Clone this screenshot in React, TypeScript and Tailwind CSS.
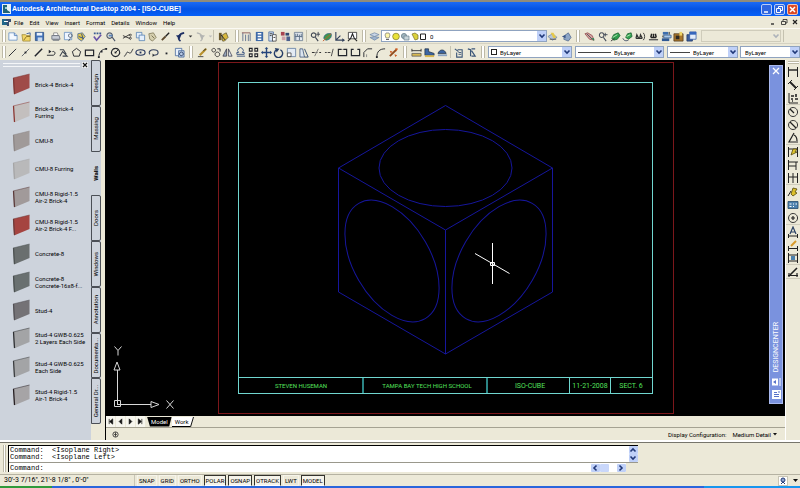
import React, { useState } from 'react';

type Tool = { label: string; art: React.ReactNode };

// Short helpers for the toolbar glyphs, all drawn on a 12x12 grid
const ln = (d: string, stroke = '#22252c', width = 1) => (
  <path d={d} stroke={stroke} strokeWidth={width} fill="none" />
);
const fl = (d: string, fill = '#22252c', stroke = 'none') => (
  <path d={d} fill={fill} stroke={stroke} strokeWidth={0.8} />
);
const tool = (label: string, ...parts: React.ReactNode[]): Tool => ({
  label,
  art: parts.map((part, i) => <React.Fragment key={i}>{part}</React.Fragment>),
});

const fileTools: Tool[] = [
  tool('New', fl('M2 2h6l3 3v5H2z', '#f4f9ff', '#5b86bd'), ln('M8 2v3h3', '#5b86bd')),
  tool('Open', fl('M1 4h4l1 1h4v6H2z', '#f1d567', '#9a8430'), ln('M6 3l4-1v3', '#3c5f9a'), ln('M3 10l3-4h4', '#8a7020')),
  tool('Save', fl('M1.500 1.500h9v9h-9z', '#3f70b8', '#23477e'), fl('M3 2h6v3H3z', '#e9f1fb'), fl('M4 7h5v4H4z', '#c8d8ec')),
];
const printTools: Tool[] = [
  tool('Plot', fl('M4 2h4l1 3H4z', '#fff', '#777'), fl('M2 5h8l1 4H2z', '#c7ccd6', '#596070'), ln('M3 10h7', '#596070')),
  tool('Plot Preview', fl('M1.500 1.500h8v8h-8z', '#eef5ff', '#5b86bd'), ln('M8 3a2 2 0 1 0 .1 0M8 8l-2 3', '#4a5568')),
  tool('Publish', fl('M2 3l5-1 3 4-4 5-4-3z', '#e5c94d', '#3c5f9a'), ln('M3 6l5 2M6 3l2 6', '#2c4d86')),
];
const checkTools: Tool[] = [
  tool('Spelling', ln('M2 2.500h2M5 2.500h2M8 2.500h2', '#3a5c92', 2), ln('M2 6l3 4 5-6', '#6b55a8', 1.8)),
  tool('Find', ln('M5 2a3 3 0 1 0 .1 0M8 7l3 4', '#4a5568', 1.2), fl('M4 4h4v2H4z', '#5b86bd')),
];
const editTools: Tool[] = [
  tool('Cut', ln('M1 5l7 3M1 8l7-4', '#333'), ln('M9 3.500a1 1 0 1 0 .1 0M9 7a1 1 0 1 0 .1 0', '#333')),
  tool('Copy', fl('M1.500 1.500h6v6h-6z', '#e4effc', '#4c78ae'), fl('M4.500 4.500h6v6h-6z', '#e4effc', '#4c78ae')),
  tool('Paste', fl('M2 3l5-1 3 5-4 4-3-2z', '#d5cfae', '#77704f'), ln('M5 5l3 3', '#77704f')),
  tool('Match Properties', ln('M2 10l4-4', '#5e4a2e', 2), ln('M6 6l4-4', '#222', 1.5)),
];
const undoTools: Tool[] = [tool('Undo', ln('M6 11C2 8 4 3 10 2', '#1d2f63', 1.8), fl('M1 5l4 4 2-5z', '#1d2f63'))];
const undoListTools: Tool[] = [tool('Undo list', fl('M4 5h4L6 7z', '#333'))];
const redoTools: Tool[] = [tool('Redo', ln('M6 11c4-3 2-8-4-9', '#b4b5b2', 1.4), fl('M11 5L7 9 5 4z', '#b4b5b2'))];
const redoListTools: Tool[] = [tool('Redo list', fl('M4 5h4L6 7z', '#bbb'))];
const palTools: Tool[] = [
  tool('Content Browser', fl('M1 2h3v8H1z', '#6c5a2c'), fl('M5 4l4-2 2 5-4 4H5z', '#d8b83c', '#5d5330'), ln('M3 4l5 6', '#222')),
];
const navTools: Tool[] = [
  tool('Project Browser', ln('M2 2v9M5 4v7M8 4v7M10 2v9', '#62738f'), ln('M1 2h9', '#8b5a5a')),
  tool('DesignCenter', fl('M2 1h8v10H2z', '#3e6aa8'), ln('M4 3h4M4 6h4M4 9h4', '#fff', 1.4)),
  tool('Properties', fl('M2 1h5v10H2z', '#d7e4f5', '#3b5f95'), fl('M6 4h4v7H6z', '#fff', '#333'), ln('M3 3h3M3 5h2M7 7h2', '#333')),
  tool('Tool Palettes', fl('M1 1h4v4H1z', '#a84450'), fl('M6 2h4v3H6z', '#33486f'), fl('M2 6h4v4H2z', '#cfa0a8'), fl('M7 6h4v5H7z', '#4b5f8c')),
  tool('Sheets', fl('M1.500 1.500h9v9h-9z', '#e2e8ef', '#5f7288'), ln('M3 3v7M5 3v3M7 4v6M9 3v4M2 6h8', '#5f7288')),
];
const viewTools: Tool[] = [
  tool('Zoom', ln('M5 2a2.500 2.500 0 1 0 .1 0M7 7l3 4', '#3c4350', 1.2), ln('M10 1v5M8 3.500h4', '#3c4350')),
  tool('3D Orbit', fl('M2 8c0-4 4-6 8-5 1 4-2 7-6 7z', '#3f9a4a', '#2a5f84'), ln('M1 11l9-8', '#c45b2c')),
  tool('UCS', ln('M2 1v9h9M2 10l5-5', '#33415c', 1.2), fl('M9 8l3 2-3 2z', '#33415c')),
  tool('Named Views', fl('M1.500 1.500h9v7h-9z', '#fff', '#222'), ln('M4 8l2-5 2 5M1 11l3-3M11 11L8 8', '#222', 1.2)),
];
const layerTools: Tool[] = [
  tool('Layer Manager', fl('M1 4l5-2 5 2-5 2z', '#c9d6e6', '#6f87a5'), fl('M1 7l5-1 5 1-5 3z', '#9db3cd', '#6f87a5')),
];
const layerEndTools: Tool[] = [
  tool('Make Layer Current', fl('M1 6l5-3 5 4-5 3z', '#b6c4d8', '#6f87a5'), fl('M4 2h3l3 5-3 1z', '#e6c94a'), ln('M3 9h7', '#555')),
  tool('Layer Previous', fl('M4 5l4-3 3 5-3 4-5-2z', '#8ea6c6', '#4d668c'), fl('M1 6l4-2v4z', '#3a5687')),
];
const navigateTools: Tool[] = [
  tool('Pan', fl('M1 3l3-1 5 3 2 5-5-1z', '#d4a0a0', '#8d4848'), ln('M3 3l6 6', '#555'), fl('M8 8h3v3z', '#2c8754')),
  tool('Zoom Realtime', ln('M5 2a2.500 2.500 0 1 0 .1 0M7 7l3 4', '#444b58', 1.1), ln('M9 2v4M7.500 4h4', '#444b58')),
  tool('Orbit Left', fl('M2 8l2-4 5-2 2 3-3 4-4 1z', '#2e9d4b', '#175a2c'), ln('M3 7l5-3', '#b6e9b8'), ln('M1 11l4-3', '#333')),
  tool('Orbit Right', fl('M4 7l2-4 4-1 1 4-4 3z', '#34a352', '#175a2c'), ln('M1 8c1 3 4 3 6 2', '#39465e'), ln('M5 6l4-2', '#c0ecb8')),
  tool('Find Object', ln('M1 8l1-4 2 4M5 8l1-4 2 4M1 8h7', '#333', 1.3), ln('M9 2c2 2 2 6 0 8', '#333')),
  tool('Find Next', ln('M3 7l1-4M9 7L8 3M6 3v4M3 7h6', '#222', 1.6), ln('M1 9.500h10', '#555', 1.4)),
  tool('Render', fl('M2 1h6v3H2z', '#3d6eae'), fl('M3 4.500h8v3H3z', '#a9c8ea', '#30578c'), fl('M1 8h8v3H1z', '#2e5894'), ln('M9 1v3M2 5v2', '#333')),
  tool('Materials', fl('M1 3h10v8H1z', '#a9762c', '#4f3a1d'), fl('M3 5h4v4H3z', '#2e2a24'), fl('M7 1h3v4H7z', '#f0d565')),
  tool('Launch', fl('M1 4h6v7H1z', '#3c5f9c', '#1e3566'), fl('M4 1h7v8H4z', '#e4edfa', '#2f55a0'), fl('M4 1h7v3H4z', '#3767bc')),
];

const drawTools: Tool[] = [
  tool('Line', ln('M2 10l8-8')),
  tool('Construction Line', ln('M2 10l8-8', '#5b6068'), fl('M5 5h2v2H5z')),
  tool('Ray', ln('M2 10l8-8', '#22252c', 1.6)),
  tool('Polyline', ln('M1 9h7c3-1 2-5-1-4'), fl('M3 3l3 2-3 2z')),
  tool('3D Polyline', ln('M2 3h4l3 5M2 10l3-5 5 5H5', '#3e454f', 1.2)),
  tool('Polygon', ln('M6 1.500l4.500 3.500-1.500 5H3L1.500 5z')),
  tool('Rectangle', ln('M1.500 3.500h9v6h-9z', '#22252c', 1.3)),
  tool('Arc', ln('M2 11C2 6 5 2 11 2'), fl('M1 10h2v2H1zM9 1h2v2H9zM4 4h2v2H4z')),
  tool('Circle', ln('M6 1.500a4.500 4.500 0 1 0 .1 0', '#22252c', 1.2), ln('M6 6l3-3'), fl('M5 5h2v2H5z')),
  tool('Spline', ln('M1 10c3 0 2-6 5-4s3-1 5-4')),
  tool('Ellipse', ln('M6 3c3 0 5 1 5 3s-2 3-5 3-5-1-5-3 2-3 5-3', '#22335c', 1.2), fl('M5 5h2v2H5z', '#22335c')),
  tool('Ellipse Arc', ln('M2 8C0 5 3 3 6 3s5 1 5 3-2 3-5 3', '#35425e', 1.2), fl('M5 7l2 2-2 2z')),
  tool('Point', fl('M5 6h2v2H5z')),
  tool('Hatch', fl('M1.500 1.500h7v8h-7z', '#e9f1fb', '#3b5f95'), fl('M5 4h6v7H5z', '#b9cce6', '#3b5f95'), ln('M8 5.500a2 2 0 1 0 .1 0', '#23365f')),
];
const modifyTools: Tool[] = [
  tool('Erase', ln('M1 10.500h6', '#444'), ln('M3 9l7-7', '#b8912c', 2.4), ln('M7 4l3-2', '#333')),
  tool('Copy Object', ln('M4 1.500a2 2 0 1 0 .1 0M8 5.500a2.500 2.500 0 1 0 .1 0', '#333'), ln('M8 2h3v3')),
  tool('Mirror', fl('M5 2v8H1z', '#98a8bc', '#334'), fl('M7 2v8h4z', '#dfe6ee', '#334')),
  tool('Offset', ln('M2 10h9M2 8h8V6H8a3 3 0 1 0-4 0H2z', '#38527e')),
  tool('Array', ln('M1.500 1.500h3v3h-3zM7.500 1.500h3v3h-3zM1.500 7.500h3v3h-3zM7.500 7.500h3v3h-3z', '#22252c', 1.2)),
  tool('Move', ln('M6 1v10M1 6h10', '#24447b', 1.5), fl('M6 0l2 2H4zM6 12l2-2H4zM0 6l2-2v4zM12 6l-2-2v4z', '#24447b')),
  tool('Rotate', ln('M4 3a4.500 4.500 0 1 0 4 0', '#243c66', 1.5), fl('M2 1l5 1-3 4z', '#243c66')),
  tool('Scale', fl('M1.500 1.500h9v9h-9z', '#e3ebf4', '#54729b'), fl('M1.500 6.500h4v4h-4z', '#fff', '#333')),
  tool('Stretch', fl('M1 11V2h3l2 9z', '#dce5f0', '#30496f'), ln('M6 2l4 9H6', '#30496f')),
  tool('Trim', ln('M1 6h3M5 6h2M9 6h2', '#333', 1.2), ln('M4 10l4-8', '#777')),
  tool('Extend', ln('M1 6h2M4 6h3', '#444', 1.2), ln('M10 2L8 10', '#444')),
  tool('Break at Point', ln('M1.500 2.500h9v7h-9z', '#22252c', 1.3), fl('M5 1h2v2H5z', '#ece9d8')),
  tool('Break', ln('M4 2.500H1.500v7h9v-7H8', '#22252c', 1.3)),
  tool('Chamfer', ln('M2 11V6l4-4h5'), ln('M5 11V8', '#888')),
  tool('Fillet', ln('M2 11C2 5 5 2 11 2'), fl('M1 10h2v2H1z')),
  tool('Explode', ln('M2 10l7-7', '#8f4a1c', 2), fl('M8 1l3 1-2 3zM2 4l3 1-2 2zM7 8l3 1-2 2z', '#cf5d24')),
];
const inquiryTools: Tool[] = [
  tool('Distance', fl('M1 7h10v3H1z', '#d8b850', '#555'), ln('M1 4h10M1 2v3M11 2v3', '#333')),
  tool('Area', fl('M1 2h4v3l6 2v2H1z', '#3c66a4', '#234'), fl('M1 9h10v2H1z', '#d8b850')),
  tool('Region', fl('M1 7c2-5 7-5 9 0z', '#3c66a4', '#234'), fl('M1 8h10v2H1z', '#8aa4c4')),
];
const listTools: Tool[] = [
  tool('List', ln('M2 2l4 3M5 3h5v8H4V6', '#3b5678', 1.2), ln('M6 6h3M6 8h3', '#3b5678')),
  tool('Locate Point', ln('M2 2l3 1v7M6 2h4M6 4l4 6H6', '#3b5678', 1.3)),
];

const dimTools: Tool[][] = [
  [
    tool('Linear Dimension', ln('M1.500 1v10M10.500 1v10', '#222'), ln('M2 4h8', '#222', 1.4)),
    tool('Aligned Dimension', ln('M3 3l6 6', '#222', 1.8), ln('M1 5l4-4M7 11l4-4', '#222')),
    tool('Ordinate', ln('M2 1v10h9', '#222'), ln('M4 4h3M9 2v3M4 7h2M8 7h3M5 9h1', '#222', 1.6)),
  ],
  [
    tool('Radius', ln('M6 1.500a4.500 4.500 0 1 0 .1 0', '#333'), ln('M3 3l4 4', '#222', 1.3)),
    tool('Diameter', ln('M6 1.500a4.500 4.500 0 1 0 .1 0', '#333'), ln('M3 3l6 6', '#222', 1.3)),
    tool('Angular', ln('M7 1L2 10h9M7 3c2 1 3 4 3 6', '#222', 1.2)),
  ],
  [
    tool('Quick Dimension', ln('M1.500 1v10M10.500 1v10M2 3h8', '#222'), fl('M4 9l2-6h4L8 6h2z', '#e1c62c', '#554a10')),
    tool('Baseline', ln('M1.500 1v10M1 3h10M2 7h7M9 3v8', '#222')),
    tool('Continue', ln('M1.500 1v10M6 1v10M10.500 1v10M1 5h10', '#222')),
  ],
  [
    tool('Quick Leader', fl('M4 8l2-6 4 1-2 3 2 1-4 3z', '#dcc02c', '#554a10'), ln('M1 10l3-5', '#222')),
    tool('Tolerance', fl('M1 2.500h10v7H1z', '#4d81ad', '#254a6c'), ln('M2.500 5h2M6 5h1M8.500 5h1.500M2.500 7.500h2M6 7.500h1', '#fff')),
    tool('Center Mark', ln('M6 1.500a4.500 4.500 0 1 0 .1 0', '#333'), ln('M6 4v4M4 6h4', '#222', 1.2)),
  ],
  [
    tool('Dimension Edit', ln('M3 8l3-7 3 7M4 6h4', '#2a4165', 1.2), ln('M1 10h10M1.500 8v4M10.500 8v4', '#222')),
    tool('Dimension Text Edit', ln('M4 7l5-5', '#d99a2a', 2), ln('M1 9.500h10M1.500 7v5M10.500 7v5', '#222')),
    tool('Dimension Update', ln('M1.500 1v10M10.500 1v10M2 3h8M2 9h8', '#222'), fl('M4 4h4v4H4z', '#4d81ad')),
  ],
  [tool('Dimension Style', ln('M3 9l7-7', '#222', 1.6), ln('M1 9.500h10M2 7v4M10 7v4', '#222', 1.2))],
];

const menus = ['File', 'Edit', 'View', 'Insert', 'Format', 'Details', 'Window', 'Help'];

const walls: { name: string[]; color: string; edge: string }[] = [
  { name: ['Brick-4 Brick-4'], color: '#9f4b48', edge: '#7d3735' },
  { name: ['Brick-4 Brick-4', 'Furring'], color: '#c3bfbe', edge: '#8b3531' },
  { name: ['CMU-8'], color: '#a09a99', edge: '#8c8685' },
  { name: ['CMU-8 Furring'], color: '#b9b9ba', edge: '#a5a5a6' },
  { name: ['CMU-8 Rigid-1.5', 'Air-2 Brick-4'], color: '#a19a9a', edge: '#5b3a3a' },
  { name: ['CMU-8 Rigid-1.5', 'Air-2 Brick-4 F...'], color: '#a54440', edge: '#6c3b39' },
  { name: ['Concrete-8'], color: '#6a6f6f', edge: '#4d5252' },
  { name: ['Concrete-8', 'Concrete-16x8-f...'], color: '#697070', edge: '#4a5050' },
  { name: ['Stud-4'], color: '#747276', edge: '#535156' },
  { name: ['Stud-4 GWB-0.625', '2 Layers Each Side'], color: '#a3a4a6', edge: '#2e3033' },
  { name: ['Stud-4 GWB-0.625', 'Each Side'], color: '#a3a4a6', edge: '#3a3c3f' },
  { name: ['Stud-4 Rigid-1.5', 'Air-1 Brick-4'], color: '#a6a4a6', edge: '#241d20' },
];

const paletteTabs = ['Design', 'Massing', 'Walls', 'Doors', 'Windows', 'Annotation', 'Documenta...', 'General Dr...'];

const Glyph: React.FC<{ children: React.ReactNode }> = ({ children }) => (
  <svg viewBox="0 0 12 12" className="size-full" aria-hidden="true">
    {children}
  </svg>
);

const Tools: React.FC<{ items: Tool[]; className?: string }> = ({ items, className = '' }) => (
  <div className={`flex shrink-0 items-center justify-between ${className}`}>
    {items.map((item) => (
      <button key={item.label} type="button" aria-label={item.label} title={item.label} className="size-[11px] shrink-0">
        <Glyph>{item.art}</Glyph>
      </button>
    ))}
  </div>
);

const Grip = () => <div className="h-3 w-1 shrink-0 border-x border-[#bdb9a6] bg-white" />;
const Divider = () => <div className="h-3 w-px shrink-0 bg-[#c5c2b0]" />;

const Chevron = () => (
  <svg viewBox="0 0 8 8" className="size-2">
    <path d="M1.500 2.500L4 5l2.500-2.500" stroke="#203878" strokeWidth="1.600" fill="none" />
  </svg>
);

type ComboProps = { label: string; value?: string; lead?: React.ReactNode; disabled?: boolean; className: string; indent?: string };

const Combo: React.FC<ComboProps> = ({ label, value = '', lead, disabled, className, indent = '' }) => (
  <label
    className={`flex items-center border ${disabled ? 'border-[#cfccbb] bg-[#ece9d8]' : 'border-[#8fa3c0] bg-white'} ${className}`}
  >
    {lead}
    <select
      aria-label={label}
      disabled={disabled}
      className={`h-full min-w-0 flex-1 appearance-none bg-transparent outline-none ${indent}`}
    >
      <option>{value}</option>
    </select>
    <span
      className={`flex h-full w-[9px] shrink-0 items-center justify-center ${disabled ? 'opacity-30' : 'bg-[#bfd0f8]'}`}
    >
      <Chevron />
    </span>
  </label>
);

const TitleBar = () => (
  <header className="flex h-[14px] shrink-0 items-center bg-linear-to-b from-[#1a6af5] via-[#0453e4] to-[#0660f8] pr-[2px] pl-[2px] text-white">
    <svg viewBox="0 0 9 10" className="mr-px h-[10px] w-[9px]">
      <rect width="9" height="10" fill="#e6f0f4" />
      <path d="M1 1h4v5l3 2v1H1z" fill="#1f6478" />
      <path d="M3 3h2v2H3z" fill="#9fd0d8" />
    </svg>
    <h1 className="flex-1 font-['Liberation_Sans',sans-serif] text-[7px] leading-[12px] font-bold whitespace-nowrap">
      Autodesk Architectural Desktop 2004 - [ISO-CUBE]
    </h1>
    <div className="flex gap-[2px]">
      <button type="button" aria-label="Minimize" className="size-[11px] rounded-[2px] border border-[#b9cdf8] bg-[#2f66e0]">
        <svg viewBox="0 0 9 9"><path d="M2 7h4" stroke="#fff" strokeWidth="1.500" /></svg>
      </button>
      <button type="button" aria-label="Restore" className="size-[11px] rounded-[2px] border border-[#b9cdf8] bg-[#2f66e0]">
        <svg viewBox="0 0 9 9"><path d="M3.500 3V1.500h4v4H6M1.500 3.500h4v4h-4z" stroke="#fff" fill="none" /></svg>
      </button>
      <button type="button" aria-label="Close" className="size-[11px] rounded-[2px] border border-[#f3c4b6] bg-[#dc4a24]">
        <svg viewBox="0 0 9 9"><path d="M2 2l5 5M7 2L2 7" stroke="#fff" strokeWidth="1.500" /></svg>
      </button>
    </div>
  </header>
);

const MenuBar = () => (
  <nav className="flex h-3 shrink-0 items-center pr-px pl-[2px]">
    <svg viewBox="0 0 9 8" className="mr-[3px] h-2 w-[9px]">
      <path d="M0 1h5v6H0z" fill="#23688a" />
      <path d="M4 1h5v3H7v4H5z" fill="#3a4f72" />
      <path d="M2 3h4v1H2z" fill="#fff" />
    </svg>
    <div className="flex flex-1 gap-[6px]">
      {menus.map((menu) => (
        <button key={menu} type="button">{menu}</button>
      ))}
    </div>
    <div className="flex gap-[3px]">
      <button type="button" aria-label="Minimize drawing" className="size-2">
        <svg viewBox="0 0 8 8"><path d="M2 6h3" stroke="#222" strokeWidth="1.300" /></svg>
      </button>
      <button type="button" aria-label="Restore drawing" className="size-2">
        <svg viewBox="0 0 8 8"><path d="M3 3V1.500h4V5H5.500M1.500 3.500h4v3h-4z" stroke="#222" strokeWidth=".8" fill="none" /></svg>
      </button>
      <button type="button" aria-label="Close drawing" className="size-2">
        <svg viewBox="0 0 8 8"><path d="M2 2l4 4M6 2L2 6" stroke="#222" strokeWidth="1.200" /></svg>
      </button>
    </div>
  </nav>
);

const LayerState = () => (
  <svg viewBox="0 0 44 9" className="h-[9px] w-[44px] shrink-0">
    <path d="M4 1h3l1 2-1 3H4L3 3z" fill="#fdf6a8" stroke="#777" strokeWidth=".7" />
    <path d="M4 7h3v1H4z" fill="#666" />
    <circle cx="14" cy="4.500" r="3.300" fill="#e9e23a" stroke="#8a8630" strokeWidth=".8" />
    <circle cx="22" cy="4" r="2.600" fill="#9fb3bd" stroke="#5f7480" strokeWidth=".7" />
    <path d="M22 4h5v4h-5z" fill="#c8d4da" stroke="#6f828c" strokeWidth=".7" />
    <path d="M30 2l3-1 3 2v4l-3 1z" fill="#dcd13c" stroke="#77702a" strokeWidth=".7" />
    <path d="M38.500 2h5v5.500h-5z" fill="#fff" stroke="#222" />
  </svg>
);

const Toolbars = () => (
  <div className="shrink-0">
    <div className="flex h-[15px] items-center overflow-hidden border-t border-[#fbfaf4] pl-[2px]">
      <Grip />
      <Tools items={fileTools} className="ml-px w-[38px]" />
      <div className="w-[5px]" />
      <Tools items={printTools} className="w-[37px]" />
      <div className="w-[5px]" />
      <Tools items={checkTools} className="w-[24px]" />
      <div className="w-[6px]" />
      <Tools items={editTools} className="w-[49px]" />
      <div className="flex w-[42px] items-center justify-between pl-1">
        <Tools items={undoTools} />
        <Tools items={undoListTools} className="-mx-[3px]" />
        <Tools items={redoTools} />
        <Tools items={redoListTools} className="-mx-[3px]" />
      </div>
      <div className="flex w-[17px] items-center gap-1">
        <Divider />
        <Tools items={palTools} />
      </div>
      <div className="flex w-[9px] justify-end"><Grip /></div>
      <Tools items={navTools} className="ml-[2px] w-[63px]" />
      <div className="flex w-[5px] justify-center"><Divider /></div>
      <Tools items={viewTools} className="w-[49px]" />
      <div className="flex w-[11px] justify-center"><Grip /></div>
      <Tools items={layerTools} />
      <Combo label="Layer" value="0" lead={<LayerState />} indent="pl-1" className="ml-px h-3 w-[166px] shrink-0" />
      <Tools items={layerEndTools} className="w-[25px]" />
      <div className="flex w-[12px] justify-center"><Grip /></div>
      <Tools items={navigateTools} className="w-[113px]" />
      <Combo label="Named view" disabled className="ml-[4px] h-3 w-[80px] shrink-0" />
      <div className="ml-[2px]"><Divider /></div>
    </div>
    <div className="flex h-[17px] items-center border-t border-[#d5d2c2] pl-[2px]">
      <Grip />
      <Tools items={drawTools} className="ml-px w-[178px]" />
      <div className="flex w-[12px] justify-center"><Grip /></div>
      <Tools items={modifyTools} className="w-[202px]" />
      <div className="flex w-[12px] justify-center"><Grip /></div>
      <Tools items={inquiryTools} className="w-[37px]" />
      <div className="flex w-[5px] justify-center"><Divider /></div>
      <Tools items={listTools} className="w-[24px]" />
      <div className="flex w-[11px] justify-center"><Grip /></div>
      <Combo
        label="Color"
        value="ByLayer"
        lead={<span className="ml-[2px] size-[6px] shrink-0 border border-[#222]" />}
        indent="pl-[3px]"
        className="h-3 w-[84px] shrink-0"
      />
      <Combo
        label="Linetype"
        value="ByLayer"
        lead={<span className="ml-[2px] h-px w-[33px] shrink-0 bg-[#444]" />}
        indent="pl-[3px]"
        className="ml-[3px] h-3 w-[89px] shrink-0"
      />
      <Combo
        label="Lineweight"
        value="ByLayer"
        lead={<span className="ml-[2px] h-px w-[20px] shrink-0 bg-[#444]" />}
        indent="pl-[3px]"
        className="ml-[3px] h-3 w-[71px] shrink-0"
      />
      <Combo label="Plot style" value="ByLayer" indent="pl-1" className="ml-[2px] h-3 min-w-0 flex-1" />
    </div>
  </div>
);

const ToolPalette = () => {
  const [active, setActive] = useState('Walls');

  return (
    <aside className="flex w-[106px] shrink-0 border-r border-black bg-[#ece9d8]">
      <div className="flex min-w-0 flex-1 flex-col bg-[#cdd3dc]">
        <div className="flex h-[10px] items-center gap-[2px] pr-[3px] pl-[3px]">
          <div className="h-[4px] flex-1 border-y border-[#f4f6f8]" />
          <button type="button" aria-label="Close palette" className="size-[6px] bg-[#eef0f2]">
            <svg viewBox="0 0 6 6"><path d="M1 1l4 4M5 1L1 5" stroke="#111" strokeWidth="1.100" /></svg>
          </button>
        </div>
        <ul className="flex flex-1 flex-col pb-[31px]">
          {walls.map((wall) => (
            <li key={wall.name.join(' ')} className="flex flex-1 items-center">
              <button type="button" className="flex items-center text-left leading-[7px] whitespace-nowrap">
                <svg viewBox="0 0 18 22" className="mr-[5px] ml-3 h-[22px] w-[18px]">
                  <path d="M1 5L17.500 1v14L2 21.500z" fill={wall.color} />
                  <path d="M1.500 5L2.500 21" stroke={wall.edge} strokeWidth="1.200" />
                  <path d="M1 5L17.500 1" stroke={wall.edge} strokeWidth=".5" />
                </svg>
                <span>
                  {wall.name.map((line) => (
                    <span key={line} className="block">{line}</span>
                  ))}
                </span>
              </button>
            </li>
          ))}
        </ul>
      </div>
      <div className="mr-1 mb-4 flex w-[10px] flex-col bg-[#cdd3dc]">
        {paletteTabs.map((tab) => (
          <button
            key={tab}
            type="button"
            onClick={() => setActive(tab)}
            className={`flex min-h-0 flex-1 items-center justify-center ${
              tab === active ? 'font-bold' : 'rounded-r-[2px] border border-[#4b4f56]'
            }`}
          >
            <span className="rotate-180 leading-[8px] whitespace-nowrap [writing-mode:vertical-rl]">{tab}</span>
          </button>
        ))}
      </div>
    </aside>
  );
};

// Model space: sheet border, title block, isometric cube, crosshair and UCS icon
const Drawing = () => (
  <svg viewBox="106 60 679 356" className="block size-full">
    <g fill="none" shapeRendering="crispEdges">
      <rect x="218.500" y="62.500" width="455" height="351" stroke="#7c171b" />
      <path d="M238.500 82.500h414v311h-414zM238.500 377.500h414M569.500 377.500v16M610.500 377.500v16" stroke="#70d6d0" />
      <path d="M363 378v15M487 378v15" stroke="#2b8585" strokeWidth="2" />
    </g>
    <g fill="none" stroke="#16169c">
      <path d="M445.500 105.500L552.500 168v124L445.500 354 338.500 292V168z" />
      <path d="M338.500 168l107 62 107-62M445.500 230v124" />
      <ellipse cx="445.500" cy="168" rx="66.500" ry="38.500" />
      <ellipse cx="392" cy="261" rx="66.500" ry="38.500" transform="rotate(60 392 261)" />
      <ellipse cx="499" cy="261" rx="66.500" ry="38.500" transform="rotate(-60 499 261)" />
    </g>
    <g fill="#54e05c" textAnchor="middle">
      <text x="301" y="388" fontSize="6">STEVEN HUSEMAN</text>
      <text x="427" y="388" fontSize="6">TAMPA BAY TECH HIGH SCHOOL</text>
      <text x="530" y="388" fontSize="7">ISO-CUBE</text>
      <text x="590" y="388" fontSize="7">11-21-2008</text>
      <text x="631" y="388" fontSize="7">SECT. 6</text>
    </g>
    <g fill="none" stroke="#fff">
      <path d="M492.500 243v41M475 253.500l34.500 20M490.500 262.500h4v3h-4z" />
      <path d="M114.500 400.500h6v6h-6zM117.500 404v-34M117 404.500h34" stroke="#d8d8d8" />
      <path d="M117 362l-3 8h6zM159 404.500l-8-3v6z" stroke="#d8d8d8" />
      <path d="M114.500 346.500l3.500 4 3.500-4M118 350.500v5M166.500 400.500l7 8M173.500 400.500l-7 8" stroke="#d8d8d8" />
    </g>
  </svg>
);

const DesignCenter = () => (
  <div className="absolute top-[5px] right-[2px] bottom-3 flex w-[14px] flex-col items-center border border-[#a9b9ee] bg-[#7a92de] pb-1 text-white">
    <button type="button" aria-label="Close DesignCenter" className="size-[10px]">
      <svg viewBox="0 0 10 10"><path d="M2 2l6 6M8 2L2 8" stroke="#fff" strokeWidth="1.300" /></svg>
    </button>
    <span className="mt-auto mb-[6px] rotate-180 text-[7px] leading-[10px] whitespace-nowrap [writing-mode:vertical-rl]">DESIGNCENTER</span>
    <button type="button" aria-label="Auto-hide" className="mb-[4px] h-2 w-[9px]">
      <svg viewBox="0 0 9 8"><path d="M0 .5h6v7H0z" fill="#fff" /><path d="M1 4l3-2v4z" fill="#5872c8" /><path d="M8 0v8" stroke="#fff" /></svg>
    </button>
    <button type="button" aria-label="DesignCenter properties" className="h-[9px] w-[9px]">
      <svg viewBox="0 0 9 9"><path d="M0 0h9v9H0z" fill="#fff" /><path d="M2 2.500h3M2 4.500h5M2 6.500h5M7 1v2" stroke="#5872c8" /></svg>
    </button>
  </div>
);

const navArrows = [
  { label: 'First layout', d: 'M2.500 1v6M6.500 1v6L3 4z' },
  { label: 'Previous layout', d: 'M5.500 1v6L2.500 4z' },
  { label: 'Next layout', d: 'M2.500 1v6l3-3z' },
  { label: 'Last layout', d: 'M5.500 1v6M1.500 1v6L5 4z' },
];

const LayoutTabs = () => (
  <div className="flex h-[11px] shrink-0 items-center">
    <div className="mr-[2px] flex h-full gap-px">
      {navArrows.map((arrow) => (
        <button key={arrow.label} type="button" aria-label={arrow.label} className="flex w-[9px] items-center justify-center bg-[#f7f6ee]">
          <svg viewBox="0 0 8 8" className="size-[7px]"><path d={arrow.d} fill="#111" stroke="#111" strokeWidth=".8" /></svg>
        </button>
      ))}
    </div>
    <button type="button" className="h-[10px] bg-black px-1 leading-[10px] text-white [clip-path:polygon(0_0,100%_0,90%_100%,12%_100%)]">Model</button>
    <button type="button" className="h-[10px] border-b border-black bg-white pr-[2px] pl-[3px] leading-[9px]">Work</button>
    <svg viewBox="0 0 4 10" className="h-[10px] w-1"><path d="M0 0h4L0 10z" fill="#fff" /><path d="M3.500 0L.5 10" stroke="#111" /></svg>
  </div>
);

const DrawingStatus = () => (
  <div className="flex h-[13px] shrink-0 items-center border-t border-[#a5a292] pr-2 pl-[6px]">
    <svg viewBox="0 0 8 8" className="size-[7px]">
      <circle cx="4" cy="4" r="3" fill="none" stroke="#333" />
      <path d="M4 1.500v5M2.500 4h3" stroke="#333" />
    </svg>
    <span className="mr-[6px] ml-auto">Display Configuration:</span>
    <button type="button" className="flex items-center gap-[2px]">
      Medium Detail
      <svg viewBox="0 0 4 3" className="h-[3px] w-1"><path d="M0 0h4L2 2.500z" fill="#111" /></svg>
    </button>
  </div>
);

const ScrollButton: React.FC<{ label: string; turn: string }> = ({ label, turn }) => (
  <button type="button" aria-label={label} className="flex h-2 w-[9px] items-center justify-center rounded-[1px] bg-[#bfd0f8]">
    <span className={turn}><Chevron /></span>
  </button>
);

const CommandWindow = () => (
  <section className="h-[34px] shrink-0 border-t-2 border-white">
    <div className="flex h-full border-t border-[#77756b] pt-[2px] pb-[2px] pl-[3px] font-['Liberation_Mono',monospace] text-[7px]">
      <div className="mr-[2px] w-[3px] border-x border-[#bdb9a6] bg-white" />
      <div className="flex w-[79%] flex-col border-t border-l border-black bg-white">
        <div className="flex h-[17px] border-b border-[#9a988c]">
          <pre className="flex-1 pt-px pl-px font-[inherit] leading-[7px]">{'Command:  <Isoplane Right>\nCommand:  <Isoplane Left>'}</pre>
          <div className="flex flex-col">
            <ScrollButton label="Scroll up" turn="rotate-180" />
            <ScrollButton label="Scroll down" turn="" />
          </div>
        </div>
        <div className="flex flex-1 items-center pl-px">
          <label htmlFor="command">Command:</label>
          <input id="command" className="h-[10px] min-w-0 flex-1 outline-none" />
          <ScrollButton label="Scroll left" turn="rotate-90" />
          <span className="mr-2 h-2 w-[9px] rounded-[1px] bg-[#c9d7fa]" />
          <ScrollButton label="Scroll right" turn="-rotate-90" />
          <span className="h-full w-[12px] bg-[#ece9d8]" />
        </div>
      </div>
    </div>
  </section>
);

const modes = [
  { name: 'SNAP', on: false },
  { name: 'GRID', on: false },
  { name: 'ORTHO', on: false },
  { name: 'POLAR', on: true },
  { name: 'OSNAP', on: true },
  { name: 'OTRACK', on: true },
  { name: 'LWT', on: false },
  { name: 'MODEL', on: true },
];

const StatusBar = () => {
  const [state, setState] = useState(modes);

  const toggle = (name: string) =>
    setState(state.map((mode) => (mode.name === name ? { ...mode, on: !mode.on } : mode)));

  return (
    <footer className="flex h-3 shrink-0 items-center border-t border-[#b5b2a2]">
      <output className="mr-[2px] h-full w-[135px] border-r border-[#c8c5b5] pl-1 text-[7px] leading-[11px]">30'-3 7/16", 21'-8 1/8" , 0'-0"</output>
      <div className="flex h-full gap-[2px]">
        {state.map((mode) => (
          <button
            key={mode.name}
            type="button"
            aria-pressed={mode.on}
            onClick={() => toggle(mode.name)}
            className={`border px-px leading-[9px] ${mode.on ? 'border-[#33322c] border-b-white bg-[#f5f3ea]' : 'border-[#f6f4ea]'}`}
          >
            {mode.name}
          </button>
        ))}
      </div>
      <button type="button" aria-label="Communication Center" className="mr-[5px] ml-auto size-[10px] border border-[#c8c5b5] bg-white">
        <svg viewBox="0 0 8 8"><circle cx="4" cy="3" r="2" fill="#8fa3cc" stroke="#223a77" /><path d="M2 7l2-2 2 2" stroke="#223a77" fill="none" /></svg>
      </button>
      <button type="button" aria-label="Tray menu" className="mr-[2px]">
        <svg viewBox="0 0 5 3" className="h-[3px] w-[5px]"><path d="M0 0h5L2.500 3z" fill="#111" /></svg>
      </button>
    </footer>
  );
};

const App: React.FC = () => (
  <div className="flex h-screen min-h-[488px] flex-col overflow-hidden bg-[#ece9d8] font-['Roboto',sans-serif] text-[6px] leading-[9px] text-black">
    <div className="h-[2px] shrink-0 bg-[#8f8b7c]" />
    <TitleBar />
    <MenuBar />
    <Toolbars />
    <main className="flex min-h-0 flex-1">
      <ToolPalette />
      <div className="flex min-w-0 flex-1 flex-col">
        <div className="relative min-h-0 flex-1 bg-black">
          <Drawing />
          <DesignCenter />
        </div>
        <LayoutTabs />
        <DrawingStatus />
      </div>
      <div className="flex w-[15px] shrink-0 flex-col items-center border-l border-white pt-px">
        <div className="mb-px h-[3px] w-[11px] border-y border-[#bdb9a6] bg-white" />
        {dimTools.map((group) => (
          <div key={group[0].label} className="flex w-full flex-col items-center gap-px border-b border-[#cfccbb] pt-px">
            {group.map((item) => (
              <button key={item.label} type="button" aria-label={item.label} title={item.label} className="size-3">
                <Glyph>{item.art}</Glyph>
              </button>
            ))}
          </div>
        ))}
      </div>
    </main>
    <CommandWindow />
    <StatusBar />
    <div className="flex h-[2px] shrink-0">
      <div className="w-[52px] bg-[#2f9a3a]" />
      <div className="flex-1 bg-[#2a66dc]" />
      <div className="w-[12%] bg-[#1796ee]" />
    </div>
  </div>
);

export default App;
